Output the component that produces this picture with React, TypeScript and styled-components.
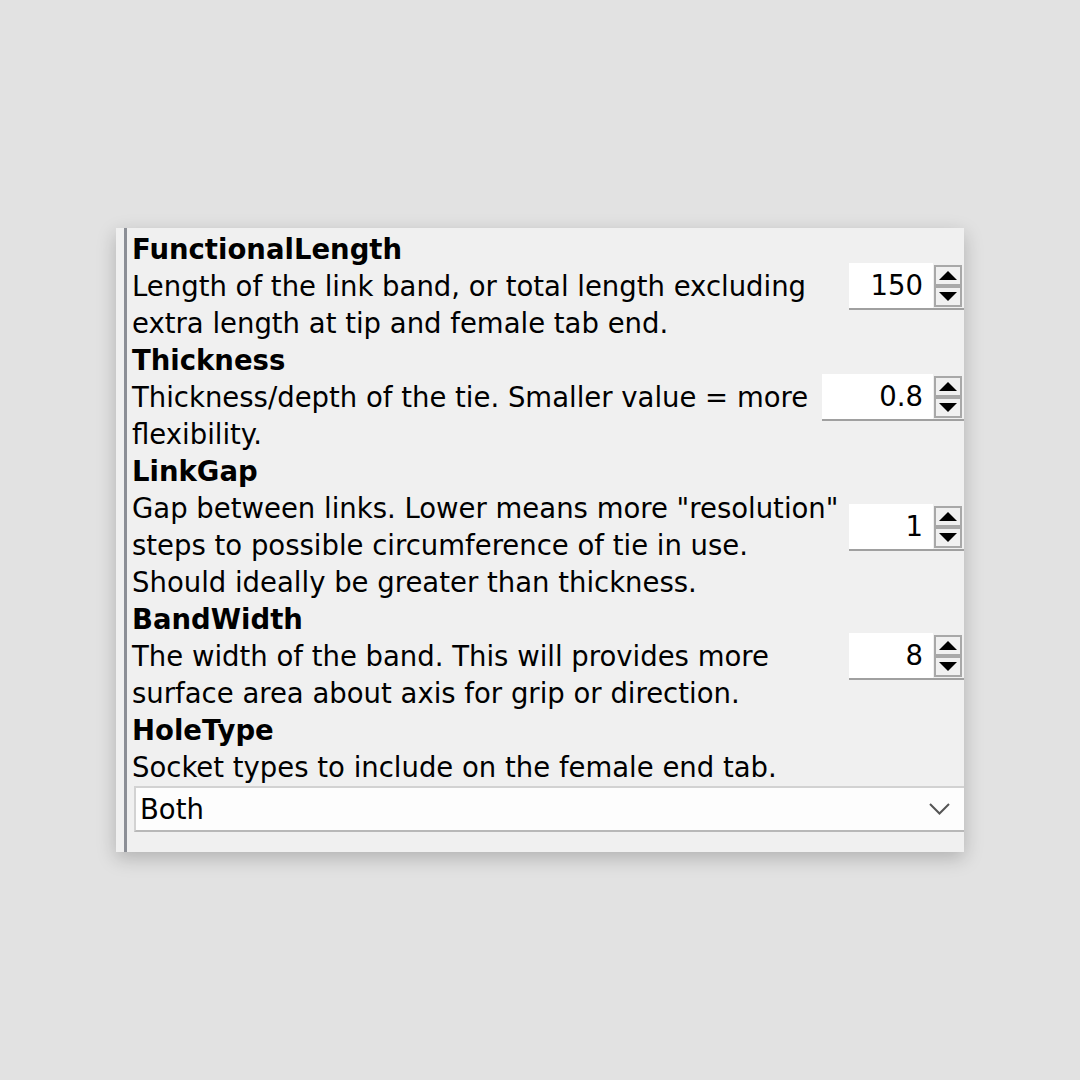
import React from "react";
import styled, { createGlobalStyle } from "styled-components";

const GlobalStyle = createGlobalStyle`
  html, body {
    margin: 0;
    padding: 0;
    background: #e2e2e2;
  }
  body {
    font-family: "DejaVu Sans", Verdana, sans-serif;
    color: #000;
  }
`;

const Page = styled.div`
  width: 1080px;
  height: 1080px;
  box-sizing: border-box;
  padding: 228px 0 0 116px;
`;

const Panel = styled.div`
  width: 848px;
  height: 624px;
  box-sizing: border-box;
  background: #f0f0f0;
  padding-left: 8px;
  display: flex;
  box-shadow: 0 6px 18px rgba(0, 0, 0, 0.22);
`;

const Content = styled.div`
  flex: 1;
  border-left: 3px solid #8c8f96;
  padding: 3px 0 20px 5px;
  display: flex;
  flex-direction: column;
`;

const Row = styled.div`
  display: grid;
  grid-template-columns: 1fr auto;
  align-items: center;
`;

const TextCol = styled.div`
  display: flex;
  flex-direction: column;
`;

const Title = styled.div`
  font-size: 27.5px;
  line-height: 37px;
  font-weight: bold;
  white-space: nowrap;
`;

const Line = styled.div`
  font-size: 27.5px;
  line-height: 37px;
  white-space: nowrap;
`;

const Spin = styled.div<{ $w: number }>`
  width: ${(p) => p.$w}px;
  height: 47px;
  box-sizing: border-box;
  display: flex;
  border-bottom: 2px solid #a0a0a0;
`;

const NumberBox = styled.div`
  flex: 1;
  background: #fff;
  font-size: 27.5px;
  line-height: 45px;
  text-align: right;
  padding-right: 10px;
`;

const Buttons = styled.div`
  width: 28px;
  margin: 2px 2px 0 1px;
  display: flex;
  flex-direction: column;
`;

const SpinButton = styled.div`
  height: 21px;
  box-sizing: border-box;
  border: 2px solid #a8a8a8;
  background: #f0f0f0;
  display: flex;
  align-items: center;
  justify-content: center;
`;

const Select = styled.div`
  margin: 0 0 0 2px;
  height: 47px;
  box-sizing: border-box;
  background: #fdfdfd;
  border-top: 2px solid #d2d2d2;
  border-left: 2px solid #d2d2d2;
  border-bottom: 2px solid #b8b8b8;
  display: flex;
  align-items: center;
  justify-content: space-between;
  padding: 0 14px 0 4px;
  font-size: 27.5px;
`;

const Arrow = ({ up }: { up?: boolean }) => (
  <svg width="18" height="9" viewBox="0 0 18 9">
    {up ? (
      <polygon points="0,9 18,9 9,0" fill="#000" />
    ) : (
      <polygon points="0,0 18,0 9,9" fill="#000" />
    )}
  </svg>
);

const Chevron = () => (
  <svg width="21" height="12" viewBox="0 0 21 12">
    <polyline points="1,1 10.5,10.5 20,1" fill="none" stroke="#555" strokeWidth="2" />
  </svg>
);

type Item = { title: string; lines: string[]; value: string; w: number };

const items: Item[] = [
  {
    title: "FunctionalLength",
    lines: ["Length of the link band, or total length excluding", "extra length at tip and female tab end."],
    value: "150",
    w: 115,
  },
  {
    title: "Thickness",
    lines: ["Thickness/depth of the tie. Smaller value = more", "flexibility."],
    value: "0.8",
    w: 142,
  },
  {
    title: "LinkGap",
    lines: [
      "Gap between links. Lower means more \"resolution\"",
      "steps to possible circumference of tie in use.",
      "Should ideally be greater than thickness.",
    ],
    value: "1",
    w: 115,
  },
  {
    title: "BandWidth",
    lines: ["The width of the band. This will provides more", "surface area about axis for grip or direction."],
    value: "8",
    w: 115,
  },
];

export default function App() {
  return (
    <Page>
      <GlobalStyle />
      <Panel>
        <Content>
          {items.map((it) => (
            <Row key={it.title}>
              <TextCol>
                <Title>{it.title}</Title>
                {it.lines.map((l) => (
                  <Line key={l}>{l}</Line>
                ))}
              </TextCol>
              <Spin $w={it.w}>
                <NumberBox>{it.value}</NumberBox>
                <Buttons>
                  <SpinButton>
                    <Arrow up />
                  </SpinButton>
                  <SpinButton>
                    <Arrow />
                  </SpinButton>
                </Buttons>
              </Spin>
            </Row>
          ))}
          <TextCol>
            <Title>HoleType</Title>
            <Line>Socket types to include on the female end tab.</Line>
          </TextCol>
          <Select>
            <span>Both</span>
            <Chevron />
          </Select>
        </Content>
      </Panel>
    </Page>
  );
}
